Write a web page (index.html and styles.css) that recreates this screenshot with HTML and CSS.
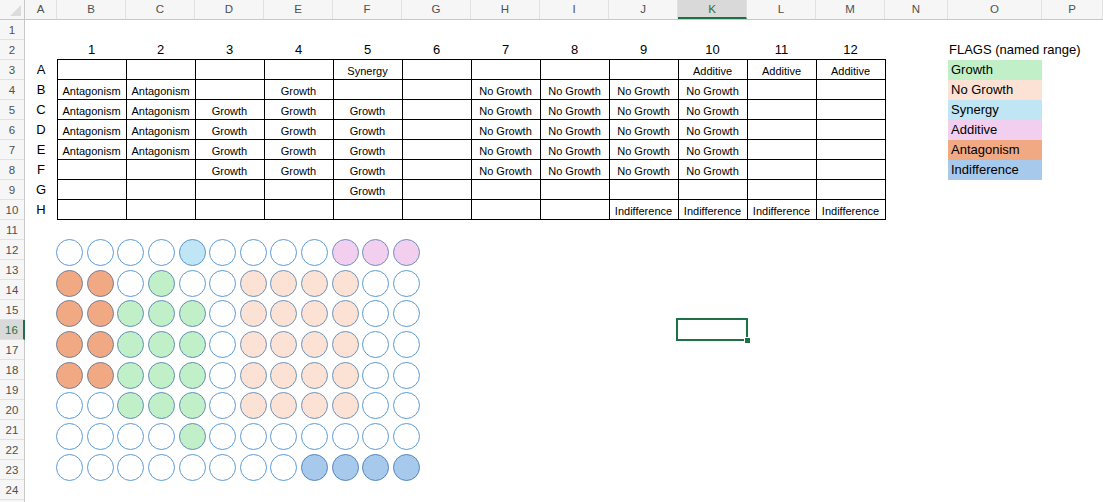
FILE: index.html
```html
<!DOCTYPE html>
<html lang="en">
<head>
    <meta charset="UTF-8">
    <meta name="viewport" content="width=device-width, initial-scale=1.0">
    <title>Plate flags</title>
    <link rel="stylesheet" href="styles.css">
</head>
<body>
    <div class="sheet">
        <div class="corner"><span class="corner-tri"></span></div>

        <div class="col-heads">
            <div class="ch col-a">A</div>
            <div class="ch">B</div>
            <div class="ch">C</div>
            <div class="ch">D</div>
            <div class="ch">E</div>
            <div class="ch">F</div>
            <div class="ch">G</div>
            <div class="ch">H</div>
            <div class="ch">I</div>
            <div class="ch">J</div>
            <div class="ch active">K</div>
            <div class="ch">L</div>
            <div class="ch">M</div>
            <div class="ch col-n">N</div>
            <div class="ch col-o">O</div>
            <div class="ch col-p">P</div>
        </div>

        <div class="row-heads">
            <div class="rh">1</div>
            <div class="rh">2</div>
            <div class="rh">3</div>
            <div class="rh">4</div>
            <div class="rh">5</div>
            <div class="rh">6</div>
            <div class="rh">7</div>
            <div class="rh">8</div>
            <div class="rh">9</div>
            <div class="rh">10</div>
            <div class="rh">11</div>
            <div class="rh">12</div>
            <div class="rh">13</div>
            <div class="rh">14</div>
            <div class="rh">15</div>
            <div class="rh active">16</div>
            <div class="rh">17</div>
            <div class="rh">18</div>
            <div class="rh">19</div>
            <div class="rh">20</div>
            <div class="rh">21</div>
            <div class="rh">22</div>
            <div class="rh">23</div>
            <div class="rh">24</div>
        </div>

        <div class="cells">
            <div class="nums">
                <span>1</span><span>2</span><span>3</span><span>4</span>
                <span>5</span><span>6</span><span>7</span><span>8</span>
                <span>9</span><span>10</span><span>11</span><span>12</span>
            </div>

            <div class="letters">
                <span>A</span><span>B</span><span>C</span><span>D</span>
                <span>E</span><span>F</span><span>G</span><span>H</span>
            </div>

            <table class="plate">
                <tr>
                    <td></td><td></td><td></td><td></td><td>Synergy</td><td></td>
                    <td></td><td></td><td></td><td>Additive</td><td>Additive</td><td>Additive</td>
                </tr>
                <tr>
                    <td>Antagonism</td><td>Antagonism</td><td></td><td>Growth</td><td></td><td></td>
                    <td>No Growth</td><td>No Growth</td><td>No Growth</td><td>No Growth</td><td></td><td></td>
                </tr>
                <tr>
                    <td>Antagonism</td><td>Antagonism</td><td>Growth</td><td>Growth</td><td>Growth</td><td></td>
                    <td>No Growth</td><td>No Growth</td><td>No Growth</td><td>No Growth</td><td></td><td></td>
                </tr>
                <tr>
                    <td>Antagonism</td><td>Antagonism</td><td>Growth</td><td>Growth</td><td>Growth</td><td></td>
                    <td>No Growth</td><td>No Growth</td><td>No Growth</td><td>No Growth</td><td></td><td></td>
                </tr>
                <tr>
                    <td>Antagonism</td><td>Antagonism</td><td>Growth</td><td>Growth</td><td>Growth</td><td></td>
                    <td>No Growth</td><td>No Growth</td><td>No Growth</td><td>No Growth</td><td></td><td></td>
                </tr>
                <tr>
                    <td></td><td></td><td>Growth</td><td>Growth</td><td>Growth</td><td></td>
                    <td>No Growth</td><td>No Growth</td><td>No Growth</td><td>No Growth</td><td></td><td></td>
                </tr>
                <tr>
                    <td></td><td></td><td></td><td></td><td>Growth</td><td></td>
                    <td></td><td></td><td></td><td></td><td></td><td></td>
                </tr>
                <tr>
                    <td></td><td></td><td></td><td></td><td></td><td></td>
                    <td></td><td></td><td>Indifference</td><td>Indifference</td><td>Indifference</td><td>Indifference</td>
                </tr>
            </table>

            <div class="flags">
                <div class="flags-title">FLAGS (named range)</div>
                <div class="flag growth">Growth</div>
                <div class="flag nogrowth">No Growth</div>
                <div class="flag synergy">Synergy</div>
                <div class="flag additive">Additive</div>
                <div class="flag antagonism">Antagonism</div>
                <div class="flag indifference">Indifference</div>
            </div>

            <div class="selected"><span class="handle"></span></div>

            <!-- plate drawing: floating shapes, one circle per well -->
            <div class="wells">
                <i></i><i></i><i></i><i></i><i class="synergy"></i><i></i>
                <i></i><i></i><i></i><i class="additive"></i><i class="additive"></i><i class="additive"></i>

                <i class="antagonism"></i><i class="antagonism"></i><i></i><i class="growth"></i><i></i><i></i>
                <i class="nogrowth"></i><i class="nogrowth"></i><i class="nogrowth"></i><i class="nogrowth"></i><i></i><i></i>

                <i class="antagonism"></i><i class="antagonism"></i><i class="growth"></i><i class="growth"></i><i class="growth"></i><i></i>
                <i class="nogrowth"></i><i class="nogrowth"></i><i class="nogrowth"></i><i class="nogrowth"></i><i></i><i></i>

                <i class="antagonism"></i><i class="antagonism"></i><i class="growth"></i><i class="growth"></i><i class="growth"></i><i></i>
                <i class="nogrowth"></i><i class="nogrowth"></i><i class="nogrowth"></i><i class="nogrowth"></i><i></i><i></i>

                <i class="antagonism"></i><i class="antagonism"></i><i class="growth"></i><i class="growth"></i><i class="growth"></i><i></i>
                <i class="nogrowth"></i><i class="nogrowth"></i><i class="nogrowth"></i><i class="nogrowth"></i><i></i><i></i>

                <i></i><i></i><i class="growth"></i><i class="growth"></i><i class="growth"></i><i></i>
                <i class="nogrowth"></i><i class="nogrowth"></i><i class="nogrowth"></i><i class="nogrowth"></i><i></i><i></i>

                <i></i><i></i><i></i><i></i><i class="growth"></i><i></i>
                <i></i><i></i><i></i><i></i><i></i><i></i>

                <i></i><i></i><i></i><i></i><i></i><i></i>
                <i></i><i></i><i class="indifference"></i><i class="indifference"></i><i class="indifference"></i><i class="indifference"></i>
            </div>
        </div>
    </div>
</body>
</html>
```

FILE: styles.css
```css
body {
    margin: 0;
    background: #fff;
    font-family: 'Liberation Sans', Arial, sans-serif;
    color: #000;
}

.sheet {
    display: grid;
    grid-template-columns: 25px 1fr;
    grid-template-rows: 20px 1fr;
    width: 1103px;
    height: 502px;
    overflow: hidden;
}

/* headers */
.corner {
    position: relative;
    background: #f6f6f6;
    border-right: 1px solid #c8c8c8;
    border-bottom: 1px solid #c8c8c8;
    box-sizing: border-box;
}

.corner-tri {
    position: absolute;
    right: 3px;
    bottom: 3px;
    width: 0;
    height: 0;
    border-left: 11px solid transparent;
    border-bottom: 11px solid #dcdcdc;
}

.col-heads {
    display: flex;
    background: #f6f6f6;
    border-bottom: 1px solid #c8c8c8;
    box-sizing: border-box;
}

.ch {
    flex: 0 0 69px;
    box-sizing: border-box;
    border-right: 1px solid #e1e1e1;
    text-align: center;
    font-size: 11.5px;
    line-height: 19px;
    color: #505050;
}

.ch.col-a { flex-basis: 32px; }
.ch.col-n { flex-basis: 63px; }
.ch.col-o { flex-basis: 94px; }
.ch.col-p { flex: 1 0 61px; }

.ch.active {
    background: #d9d9d9;
    border-bottom: 2px solid #1e7145;
    color: #1e7145;
}

.row-heads {
    background: #f6f6f6;
    border-right: 1px solid #c8c8c8;
    box-sizing: border-box;
}

.rh {
    height: 20px;
    box-sizing: border-box;
    border-bottom: 1px solid #e1e1e1;
    text-align: center;
    font-size: 11.5px;
    line-height: 20px;
    color: #505050;
}

.rh.active {
    background: #d9d9d9;
    border-right: 2px solid #1e7145;
    margin-right: -1px;
    color: #1e7145;
}

/* cell area */
.cells {
    position: relative;
    display: grid;
    grid-template-columns: 32px repeat(12, 69px) 63px 94px 1fr;
    grid-template-rows: repeat(24, 20px);
}

.nums {
    grid-column: 2 / span 12;
    grid-row: 2;
    display: grid;
    grid-template-columns: repeat(12, 69px);
    font-size: 13px;
    line-height: 20px;
    text-align: center;
}

.letters {
    grid-column: 1;
    grid-row: 3 / span 8;
    display: flex;
    flex-direction: column;
    font-size: 13px;
    line-height: 20px;
    text-align: center;
}

.plate {
    grid-column: 2 / span 12;
    grid-row: 3 / span 8;
    align-self: start;
    border-collapse: collapse;
    table-layout: fixed;
    width: 829px;
    margin: -1px 0 0 -0.5px;
}

.plate td {
    height: 16px;
    padding: 3px 0 0;
    border: 1px solid #000;
    font-size: 11px;
    line-height: 16px;
    text-align: center;
    white-space: nowrap;
    overflow: hidden;
}

.flags {
    grid-column: 15;
    grid-row: 2 / span 7;
    display: flex;
    flex-direction: column;
    font-size: 13px;
    line-height: 20px;
}

.flags-title {
    white-space: nowrap;
    padding-left: 1px;
}

.flag {
    height: 20px;
    padding-left: 3px;
}

.growth { background: #c1f0c8; }
.nogrowth { background: #fbe2d5; }
.synergy { background: #c0e6f5; }
.additive { background: #f2ceef; }
.antagonism { background: #f1a983; }
.indifference { background: #a6c9ec; }

.selected {
    grid-column: 11;
    grid-row: 16;
    position: relative;
    margin: -2px -1px -1px -2px;
    border: 2px solid #1e7145;
}

.handle {
    position: absolute;
    right: -5px;
    bottom: -5px;
    width: 5px;
    height: 5px;
    background: #1e7145;
    border: 1px solid #fff;
}

/* floating well shapes */
.wells {
    position: absolute;
    left: 31px;
    top: 219px;
    display: grid;
    grid-template-columns: repeat(12, 27px);
    grid-auto-rows: 27px;
    column-gap: 3.64px;
    row-gap: 3.7px;
}

.wells i {
    display: block;
    box-sizing: border-box;
    border: 1.4px solid #5b9bd5;
    border-radius: 50%;
    background: #fff;
}

.wells i.growth { background: #c1f0c8; border-color: #5f8fb8; }
.wells i.nogrowth { background: #fbe2d5; border-color: #6c93bb; }
.wells i.synergy { background: #c0e6f5; border-color: #5b93c8; }
.wells i.additive { background: #f2ceef; border-color: #6f8fc0; }
.wells i.antagonism { background: #f1a983; border-color: #6f7f98; }
.wells i.indifference { background: #a6c9ec; border-color: #5486bd; }
```
